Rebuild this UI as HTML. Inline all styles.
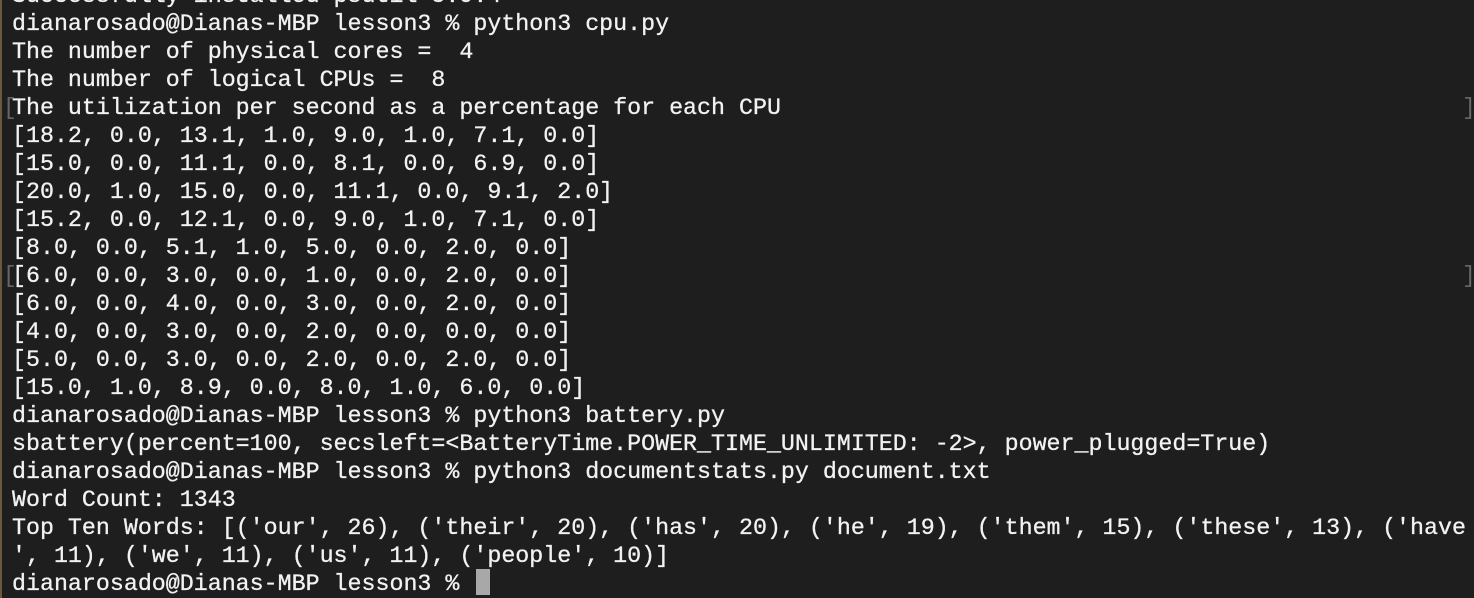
<!DOCTYPE html>
<html><head><meta charset="utf-8"><style>
html,body{margin:0;padding:0;background:#1e1e1e;width:1474px;height:598px;overflow:hidden}
body{border-left:2px solid #6b5a3a;box-sizing:border-box;position:relative}
pre{position:absolute;left:10px;top:-18px;margin:0;font-family:"Liberation Mono",monospace;font-size:23.3px;line-height:28px;color:#f2f2f2;white-space:pre;-webkit-text-stroke:0.3px #f2f2f2}
.b{position:absolute;color:#666;font-family:"Liberation Mono",monospace;font-size:23px;line-height:28px}
.cur{position:absolute;left:474px;top:569px;width:14px;height:26px;background:#a8a8a8}
</style></head><body>
<pre>Successfully installed psutil-5.9.4
dianarosado@Dianas-MBP lesson3 % python3 cpu.py
The number of physical cores =  4
The number of logical CPUs =  8
The utilization per second as a percentage for each CPU
[18.2, 0.0, 13.1, 1.0, 9.0, 1.0, 7.1, 0.0]
[15.0, 0.0, 11.1, 0.0, 8.1, 0.0, 6.9, 0.0]
[20.0, 1.0, 15.0, 0.0, 11.1, 0.0, 9.1, 2.0]
[15.2, 0.0, 12.1, 0.0, 9.0, 1.0, 7.1, 0.0]
[8.0, 0.0, 5.1, 1.0, 5.0, 0.0, 2.0, 0.0]
[6.0, 0.0, 3.0, 0.0, 1.0, 0.0, 2.0, 0.0]
[6.0, 0.0, 4.0, 0.0, 3.0, 0.0, 2.0, 0.0]
[4.0, 0.0, 3.0, 0.0, 2.0, 0.0, 0.0, 0.0]
[5.0, 0.0, 3.0, 0.0, 2.0, 0.0, 2.0, 0.0]
[15.0, 1.0, 8.9, 0.0, 8.0, 1.0, 6.0, 0.0]
dianarosado@Dianas-MBP lesson3 % python3 battery.py
sbattery(percent=100, secsleft=&lt;BatteryTime.POWER_TIME_UNLIMITED: -2&gt;, power_plugged=True)
dianarosado@Dianas-MBP lesson3 % python3 documentstats.py document.txt
Word Count: 1343
Top Ten Words: [('our', 26), ('their', 20), ('has', 20), ('he', 19), ('them', 15), ('these', 13), ('have
', 11), ('we', 11), ('us', 11), ('people', 10)]
dianarosado@Dianas-MBP lesson3 % </pre>
<div class="b" style="left:1px;top:94px">[</div>
<div class="b" style="left:1460px;top:94px">]</div>
<div class="b" style="left:1px;top:262px">[</div>
<div class="b" style="left:1460px;top:262px">]</div>
<div class="cur"></div>
</body></html>
